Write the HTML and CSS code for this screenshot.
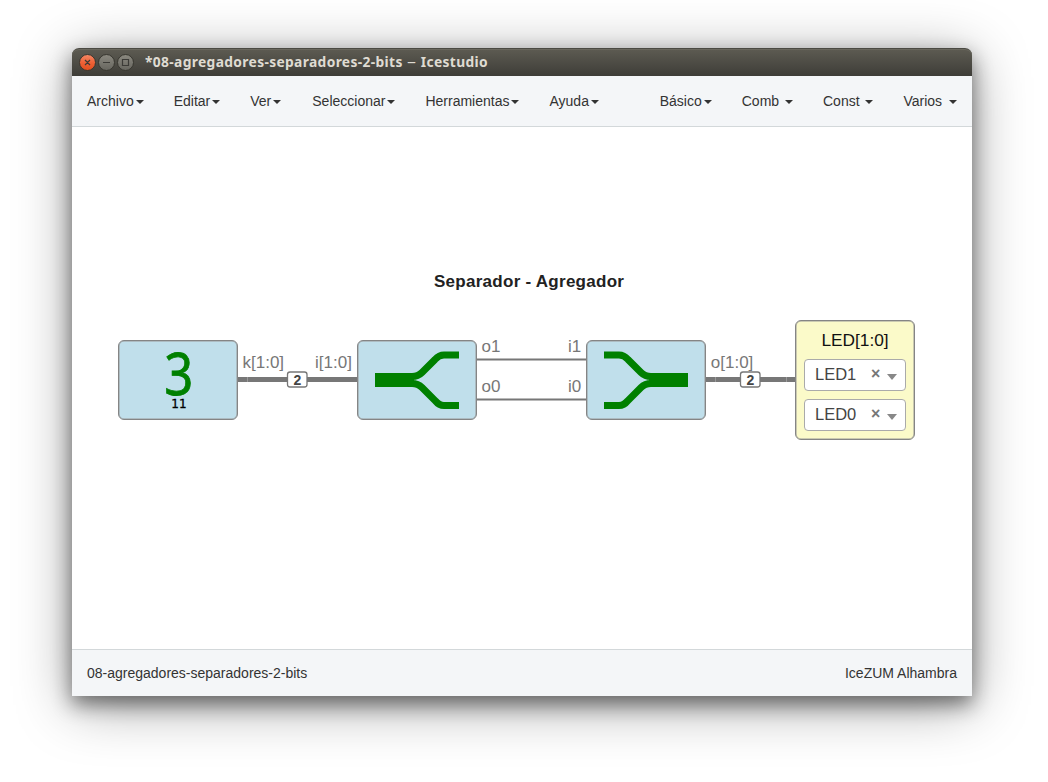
FILE: index.html
```html
<!DOCTYPE html>
<html lang="es">
<head>
<meta charset="utf-8">
<title>Icestudio</title>
<link rel="stylesheet" href="styles.css">
</head>
<body>
<main class="window">
  <header class="titlebar">
    <svg class="controls" width="56" height="18" viewBox="0 0 56 18">
      <defs>
        <linearGradient id="orange" x2="0" y2="1"><stop offset="0" stop-color="#f58a68"/><stop offset=".5" stop-color="#ee6237"/><stop offset="1" stop-color="#e04d1c"/></linearGradient>
        <linearGradient id="gray" x2="0" y2="1"><stop offset="0" stop-color="#8b8980"/><stop offset="1" stop-color="#66655e"/></linearGradient>
      </defs>
      <g stroke="#37362f" stroke-width="1">
        <circle cx="8.5" cy="8.5" r="8" fill="url(#orange)"/>
        <circle cx="27.5" cy="8.5" r="8" fill="url(#gray)"/>
        <circle cx="46.5" cy="8.5" r="8" fill="url(#gray)"/>
      </g>
      <g fill="none" stroke="#3c3b37" stroke-width="1.2">
        <path d="M6 6l5 5M11 6l-5 5M24 8.500h7M43.500 5.500h6v6h-6z"/>
      </g>
    </svg>
    <span class="title">*08-agregadores-separadores-2-bits <span class="dash">–</span> Icestudio</span>
  </header>
  <nav class="menubar">
    <div class="menu">
      <span class="item">Archivo<i class="caret"></i></span>
      <span class="item">Editar<i class="caret"></i></span>
      <span class="item wide">Ver<i class="caret"></i></span>
      <span class="item">Seleccionar<i class="caret"></i></span>
      <span class="item">Herramientas<i class="caret"></i></span>
      <span class="item">Ayuda<i class="caret"></i></span>
    </div>
    <div class="menu">
      <span class="item">Básico<i class="caret"></i></span>
      <span class="item">Comb <i class="caret"></i></span>
      <span class="item">Const <i class="caret"></i></span>
      <span class="item spaced">Varios <i class="caret"></i></span>
    </div>
  </nav>
  <section class="canvas">
    <svg class="wires" width="900" height="522" viewBox="0 0 900 522">
      <g class="bus">
        <path d="M166 252.500H286M634 252.500H724"/>
      </g>
      <g class="wire">
        <path d="M405 232.500H515M405 272.500H515"/>
      </g>
      <path class="joint" d="M175.500 250V255M643.500 250V255M714.500 250V255"/>
      <g class="tag">
        <rect x="215.500" y="245" width="19.500" height="15" rx="2.500"/>
        <rect x="668.500" y="245" width="19.500" height="15" rx="2.500"/>
        <text x="225.300" y="258">2</text>
        <text x="678.300" y="258">2</text>
      </g>
      <g class="port">
        <text x="170.500" y="241">k[1:0]</text>
        <text x="243" y="241">i[1:0]</text>
        <text x="409.500" y="225">o1</text>
        <text x="409.500" y="265">o0</text>
        <text x="496" y="225">i1</text>
        <text x="496" y="265">i0</text>
        <text x="638.800" y="241">o[1:0]</text>
      </g>
      <text class="heading" x="362" y="160">Separador - Agregador</text>
    </svg>
    <div class="node constant"><span class="value">3</span><span class="binary">11</span></div>
    <div class="node splitter">
      <svg width="118" height="78" viewBox="0 0 118 78">
        <path class="trunk" d="M17 39H56"/>
        <path class="branch" d="M50 35.500H54Q60 35.500 64 31.500L77 18.500Q81 14 86 14H101M50 42.500H54Q60 42.500 64 46.500L77 59.500Q81 64.500 86 64.500H101"/>
      </svg>
    </div>
    <div class="node joiner">
      <svg width="118" height="78" viewBox="0 0 118 78">
        <path class="trunk" d="M62 39H101"/>
        <path class="branch" d="M68 35.500H64Q58 35.500 54 31.500L41 18.500Q37 14 32 14H17M68 42.500H64Q58 42.500 54 46.500L41 59.500Q37 64.500 32 64.500H17"/>
      </svg>
    </div>
    <div class="node output">
      <div class="label">LED[1:0]</div>
      <div class="select"><span>LED1</span><b>×</b><i class="arrow"></i></div>
      <div class="select"><span>LED0</span><b>×</b><i class="arrow"></i></div>
    </div>
  </section>
  <footer class="statusbar"><span>08-agregadores-separadores-2-bits</span><span>IceZUM Alhambra</span></footer>
</main>
</body>
</html>
```
FILE: styles.css
```css
* { box-sizing: border-box; }
body { margin: 0; padding: 48px 76px 86px 72px; height: 782px; overflow: hidden; background: #fff; font: 14px/20px "Liberation Sans", Arial, sans-serif; color: #333; }
.window { display: flex; flex-direction: column; width: 900px; height: 648px; border-radius: 7px 7px 0 0; background: #fff; box-shadow: 0 8px 20px rgba(0,0,0,.48), 0 9px 56px rgba(0,0,0,.38); }
.titlebar { display: flex; align-items: center; height: 28px; padding-left: 7px; border-radius: 7px 7px 0 0; border-top: 1px solid #4b4a43; background: linear-gradient(#5d5b52, #3e3d38); box-shadow: inset 0 1px #69675d; }
.title { margin: -2px 0 0 10px; font: bold 13.800px/20px "Noto Sans", "Open Sans", sans-serif; letter-spacing: .35px; color: #dfdbd2; white-space: nowrap; }
.dash { display: inline-block; transform: scaleX(1.3); margin: 0 1.500px; font-weight: normal; }
.menubar { display: flex; justify-content: space-between; height: 51px; border-bottom: 1px solid #d3d8da; background: #f4f6f8; }
.menu { display: flex; }
.item { padding: 15px; white-space: pre; }
.wide { padding-right: 16px; }
.spaced { word-spacing: 1px; }
.caret { display: inline-block; margin-left: 2px; vertical-align: middle; border: 4px solid transparent; border-top-color: #333; border-bottom: 0; }
.canvas { position: relative; flex: 1; }
.wires { display: block; }
.bus path { stroke: #777; stroke-width: 5; }
.wire path { stroke: #777; stroke-width: 2; }
.joint { stroke: #999; stroke-width: 1; }
.tag rect { fill: #fff; stroke: #777; stroke-width: 1.300; }
.tag text { font-weight: bold; font-size: 14px; fill: #444; text-anchor: middle; }
.port text { font-size: 17px; fill: #777; }
.heading { font-weight: bold; font-size: 17px; letter-spacing: .27px; fill: #222; }
.node { position: absolute; top: 213px; width: 120px; height: 80px; border: 1px solid #858585; border-radius: 6px; background: #c0dfeb; box-shadow: inset 0 0 0 .5px #999; }
.node svg { display: block; }
.constant { left: 46px; display: flex; flex-direction: column; align-items: center; padding-left: 2px; }
.value { height: 56px; font: 59px/62px "Noto Sans", "Open Sans", sans-serif; color: #008000; -webkit-text-stroke: .8px #008000; transform: scaleX(.86); }
.binary { font: 12px/15px "DejaVu Sans", sans-serif; -webkit-text-stroke: .3px #000; color: #000; }
.splitter { left: 285px; }
.joiner { left: 514px; }
.trunk { fill: none; stroke: #008000; stroke-width: 14; }
.branch { fill: none; stroke: #008000; stroke-width: 7; }
.output { top: 193px; left: 723px; height: 120px; padding: 8px 8px 0; background: #fbfac9; }
.label { height: 30px; text-align: center; font-size: 17.300px; line-height: 22px; color: #111; }
.select { display: flex; align-items: center; height: 32px; margin-bottom: 8px; padding: 0 0 2px 10px; border: 1px solid #aaa; border-radius: 4px; background: #fff; color: #444; font-size: 16.500px; }
.select span { width: 56px; }
.select b { width: 16px; font-size: 16px; color: #777; }
.arrow { margin-top: 6px; border: 5px solid transparent; border-top: 6px solid #888; border-bottom: 0; }
.statusbar { display: flex; justify-content: space-between; height: 47px; padding: 13px 15px; border-top: 1px solid #d3d8da; background: #f4f6f8; }
```
